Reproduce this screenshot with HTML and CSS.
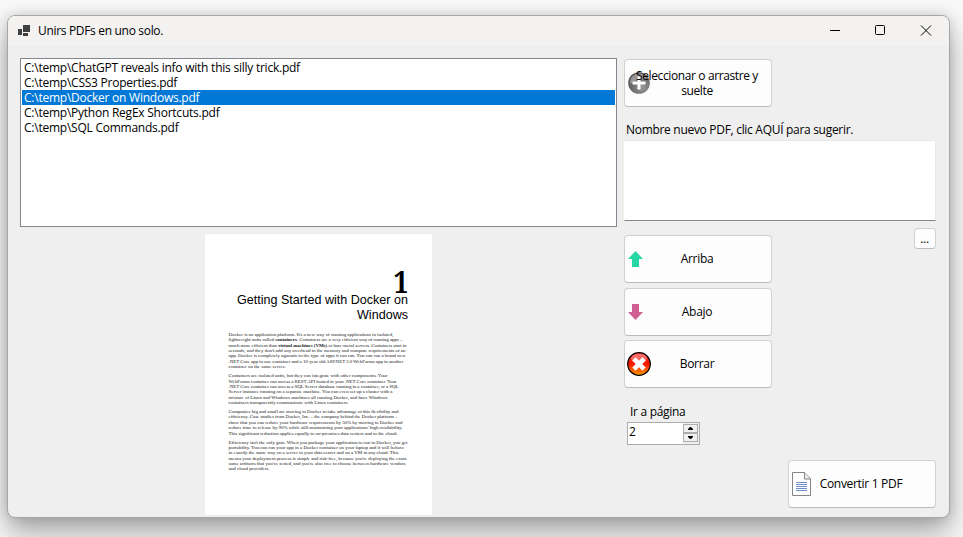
FILE: index.html
```html
<!DOCTYPE html>
<html lang="es">
<head>
<meta charset="utf-8">
<title>Unirs PDFs en uno solo.</title>
<link rel="stylesheet" href="styles.css">
</head>
<body>
<div class="window">
  <header class="titlebar">
    <svg class="app-icon" width="12" height="11" viewBox="0 0 12 11"><path fill="#404040" d="M5 0h7v7H5zM0 4h4v6H0zM5 8h5v3H5z"/></svg>
    <h1 class="title">Unirs PDFs en uno solo.</h1>
    <div class="controls">
      <svg width="46" height="30" viewBox="0 0 46 30"><path d="M18 14.500h10" stroke="#000"/></svg>
      <svg width="46" height="30" viewBox="0 0 46 30"><rect x="17.500" y="9.500" width="9" height="9" rx="1" fill="none" stroke="#000"/></svg>
      <svg width="46" height="30" viewBox="0 0 46 30"><path d="M17 9.500l10 10M27 9.500l-10 10" stroke="#000" fill="none"/></svg>
    </div>
  </header>
  <main class="content">
    <section class="left">
      <ul class="list">
        <li>C:\temp\ChatGPT reveals info with this silly trick.pdf</li>
        <li>C:\temp\CSS3 Properties.pdf</li>
        <li class="selected">C:\temp\Docker on Windows.pdf</li>
        <li>C:\temp\Python RegEx Shortcuts.pdf</li>
        <li>C:\temp\SQL Commands.pdf</li>
      </ul>
      <svg class="page" width="227" height="281" viewBox="0 0 227 281">
        <g class="heading" text-anchor="end">
          <text class="chapter" transform="translate(203.500 58.500) scale(.88 1)">1</text>
          <text x="203" y="70" textLength="171" lengthAdjust="spacingAndGlyphs">Getting Started with Docker on</text>
          <text x="203" y="85" textLength="51" lengthAdjust="spacingAndGlyphs">Windows</text>
        </g>
        <g class="body">
          <text x="23.500" y="101.800" textLength="165">Docker is an application platform. It's a new way of running applications in isolated,</text>
          <text x="23.500" y="107.200" textLength="174">lightweight units called <tspan class="b">containers</tspan>. Containers are a very efficient way of running apps –</text>
          <text x="23.500" y="112.600" textLength="178">much more efficient than <tspan class="b">virtual machines (VMs)</tspan> or bare-metal servers. Containers start in</text>
          <text x="23.500" y="118" textLength="177">seconds, and they don't add any overhead to the memory and compute requirements of an</text>
          <text x="23.500" y="123.400" textLength="177">app. Docker is completely agnostic to the type of apps it can run. You can run a brand new</text>
          <text x="23.500" y="128.800" textLength="175">.NET Core app in one container and a 10-year old ASP.NET 2.0 WebForms app in another</text>
          <text x="23.500" y="134.100" textLength="57">container on the same server.</text>
          <text x="23.500" y="143.200" textLength="159">Containers are isolated units, but they can integrate with other components. Your</text>
          <text x="23.500" y="148.500" textLength="168">WebForms container can access a REST API hosted in your .NET Core container. Your</text>
          <text x="23.500" y="153.900" textLength="170">.NET Core container can access a SQL Server database running in a container, or a SQL</text>
          <text x="23.500" y="159.300" textLength="164">Server instance running on a separate machine. You can even set up a cluster with a</text>
          <text x="23.500" y="164.700" textLength="159">mixture of Linux and Windows machines all running Docker, and have Windows</text>
          <text x="23.500" y="170.100" textLength="120">containers transparently communicate with Linux containers.</text>
          <text x="23.500" y="178.900" textLength="170">Companies big and small are moving to Docker to take advantage of this flexibility and</text>
          <text x="23.500" y="184.300" textLength="169">efficiency. Case studies from Docker, Inc. – the company behind the Docker platform –</text>
          <text x="23.500" y="189.700" textLength="174">show that you can reduce your hardware requirements by 50% by moving to Docker and</text>
          <text x="23.500" y="195.100" textLength="174">reduce time to release by 90%  while still maintaining your applications' high availability.</text>
          <text x="23.500" y="200.500" textLength="169">This significant reduction applies equally to on-premises data centers and to the cloud.</text>
          <text x="23.500" y="209.500" textLength="179">Efficiency isn't the only gain. When you package your application to run in Docker, you get</text>
          <text x="23.500" y="214.900" textLength="176">portability. You can run your app in a Docker container on your laptop and it will behave</text>
          <text x="23.500" y="220.200" textLength="170">in exactly the same way on a server in your data center and on a VM in any cloud. This</text>
          <text x="23.500" y="225.600" textLength="178">means your deployment process is simple and risk-free, because you're deploying the exact</text>
          <text x="23.500" y="231" textLength="177">same artifacts that you've tested, and you're also free to choose between hardware vendors</text>
          <text x="23.500" y="236.300" textLength="41">and cloud providers.</text>
        </g>
      </svg>
    </section>
    <section class="right">
      <button class="btn select">
        <svg class="icon" width="24" height="24" viewBox="0 0 24 24">
          <defs><radialGradient id="grey" cx=".65" cy=".7" r=".75"><stop offset="0" stop-color="#999"/><stop offset=".5" stop-color="#747474"/><stop offset="1" stop-color="#505050"/></radialGradient></defs>
          <circle cx="12" cy="12" r="10.800" fill="url(#grey)"/>
          <path fill="#bbb" opacity=".6" d="M3 10a9 9 0 0 1 17-2Q11 7 3 13z"/>
          <path fill="#fff" d="M10.500 5.500h3v5h5v3h-5v5h-3v-5h-5v-3h5z"/>
        </svg>
        <span>Seleccionar o arrastre y<br>suelte</span>
      </button>
      <label class="name-label">Nombre nuevo PDF, clic AQUÍ para sugerir.</label>
      <div class="textbox"></div>
      <div class="row">
        <button class="btn up">
          <svg class="icon" width="15" height="16" viewBox="0 0 15 16"><path fill="#26d6a4" d="M7.500 0L15 8h-4v8H4V8H0z"/></svg>
          <span>Arriba</span>
        </button>
        <button class="btn browse"><span>...</span></button>
      </div>
      <button class="btn down">
        <svg class="icon" width="15" height="16" viewBox="0 0 15 16"><path fill="#cf5f93" d="M4 0h7v8h4l-7.500 8L0 8h4z"/></svg>
        <span>Abajo</span>
      </button>
      <button class="btn delete">
        <svg class="icon" width="24" height="24" viewBox="0 0 24 24">
          <defs><linearGradient id="red" x2="0" y2="1"><stop offset="0" stop-color="#ff2020"/><stop offset=".5" stop-color="#f51800"/><stop offset="1" stop-color="#ff9c00"/></linearGradient></defs>
          <circle cx="12" cy="12" r="11.300" fill="url(#red)" stroke="#000" stroke-width="1.200"/>
          <ellipse cx="12" cy="6.500" rx="8" ry="4.800" fill="#fff" opacity=".35"/>
          <path fill="#fff" d="M8.600 5.300L12 8.700l3.400-3.400 3.300 3.300-3.400 3.400 3.400 3.400-3.300 3.300-3.400-3.400-3.400 3.400-3.300-3.300L8.700 12 5.300 8.600z"/>
        </svg>
        <span>Borrar</span>
      </button>
      <label class="page-label">Ir a página</label>
      <div class="spinner">
        <span class="value">2</span>
        <div class="steps">
          <i><svg width="5" height="3" viewBox="0 0 5 3"><path d="M2 0h1l2 2v1H0V2z"/></svg></i>
          <i><svg width="5" height="3" viewBox="0 0 5 3"><path d="M0 0h5v1L3 3H2L0 1z"/></svg></i>
        </div>
      </div>
      <button class="btn convert">
        <svg class="icon" width="19" height="24" viewBox="0 0 19 24">
          <path fill="#fff" stroke="#858585" d="M.5.5h12l6 6v17H.5z"/>
          <path fill="#eee" stroke="#858585" d="M12.500.5v6.500h6"/>
          <path stroke="#6f8fcc" d="M4 10.500h11M4 12.500h11M4 14.500h11M4 16.500h11M4 18.500h11"/>
        </svg>
        <span>Convertir 1 PDF</span>
      </button>
    </section>
  </main>
</div>
</body>
</html>
```
FILE: styles.css
```css
* { box-sizing: border-box; }

body {
  margin: 0;
  width: 963px;
  height: 537px;
  padding: 15px 13px 19px 7px;
  overflow: hidden;
  background: #f8f8f8;
  font: 12px/15px "Open Sans", "Noto Sans", sans-serif;
  letter-spacing: -0.24px;
  color: #000;
}

.window {
  height: 503px;
  border: 1px solid #a6a6a6;
  border-radius: 8px;
  background: #efefef;
  box-shadow: 0 16px 28px rgba(0, 0, 0, 0.3), 0 0 14px rgba(0, 0, 0, 0.16);
  overflow: hidden;
}

.titlebar {
  display: flex;
  align-items: center;
  height: 30px;
  padding-left: 10px;
  background: #f3f2f1;
}

.app-icon { margin-top: -2px; }

.title {
  margin: -1px 0 0 8px;
  font: inherit;
  letter-spacing: -0.32px;
}

.controls {
  display: flex;
  margin: 0 -1px 0 auto;
}

.content {
  display: flex;
  gap: 7px;
  padding: 12px 13px 0 12px;
}

.left {
  display: flex;
  flex-direction: column;
  align-items: center;
  width: 597px;
  gap: 7px;
}

.list {
  width: 100%;
  height: 169px;
  margin: 0;
  padding: 1px;
  border: 1px solid #828790;
  background: #fff;
  list-style: none;
}

.list li {
  height: 15px;
  padding-left: 2px;
  white-space: nowrap;
}

.list .selected {
  background: #0078d7;
  color: #fff;
}

.page {
  display: block;
  background: #fff;
  letter-spacing: 0;
}

.heading { font: 13.6px "Liberation Sans", sans-serif; }
.heading .chapter { font: bold 30px "Noto Serif", "Liberation Serif", serif; }
.body { font: 5px "Liberation Serif", serif; fill: #222; }
.b { font-weight: bold; }

.right {
  display: flex;
  flex-direction: column;
  align-items: flex-start;
  width: 312px;
  padding-top: 1px;
}

.btn {
  position: relative;
  display: flex;
  align-items: center;
  justify-content: center;
  width: 148px;
  height: 48px;
  padding: 0;
  border: 1px solid #d0d0d0;
  border-bottom-color: #bcbcbc;
  border-radius: 4px;
  background: #fdfdfd;
  font: inherit;
  letter-spacing: -0.3px;
  color: inherit;
}

.btn .icon {
  position: absolute;
  left: 3px;
}

.btn span {
  padding-right: 2px;
  white-space: nowrap;
  z-index: 1;
}

.btn.up span,
.btn.down span,
.btn.delete span,
.btn.convert span { padding-bottom: 1px; }

.select { letter-spacing: -0.38px; }
.select .icon { left: 2px; }

.name-label {
  margin: 15px 0 3px 2px;
  letter-spacing: -0.3px;
}

.textbox {
  width: 312px;
  height: 81px;
  border: 1px solid #e8e8e8;
  border-left-color: #fff;
  border-bottom-color: #868686;
  background: #fff;
}

.row {
  display: flex;
  justify-content: space-between;
  width: 100%;
  margin-top: 7px;
}

.up { margin-top: 7px; }

.browse {
  width: 22px;
  height: 21px;
}

.btn.browse span { padding-right: 1px; }

.down { margin-top: 5px; }
.delete { margin-top: 4px; }
.delete .icon { left: 2px; }

.page-label {
  margin: 16px 0 3px 6px;
  letter-spacing: -0.3px;
}

.spinner {
  display: flex;
  justify-content: space-between;
  width: 73px;
  height: 23px;
  margin-left: 3px;
  border: 1px solid #abadb3;
  background: #fff;
}

.value {
  padding: 1px 0 0 1px;
}

.steps {
  display: flex;
  flex-direction: column;
  width: 16px;
  padding: 1px 1px 2px 0;
  background: #f0f0f0;
}

.steps i {
  display: flex;
  flex: 1;
  align-items: center;
  justify-content: center;
  border: 1px solid #adadad;
  background: #f0f0f0;
}

.convert {
  align-self: flex-end;
  margin-top: 15px;
}
```
